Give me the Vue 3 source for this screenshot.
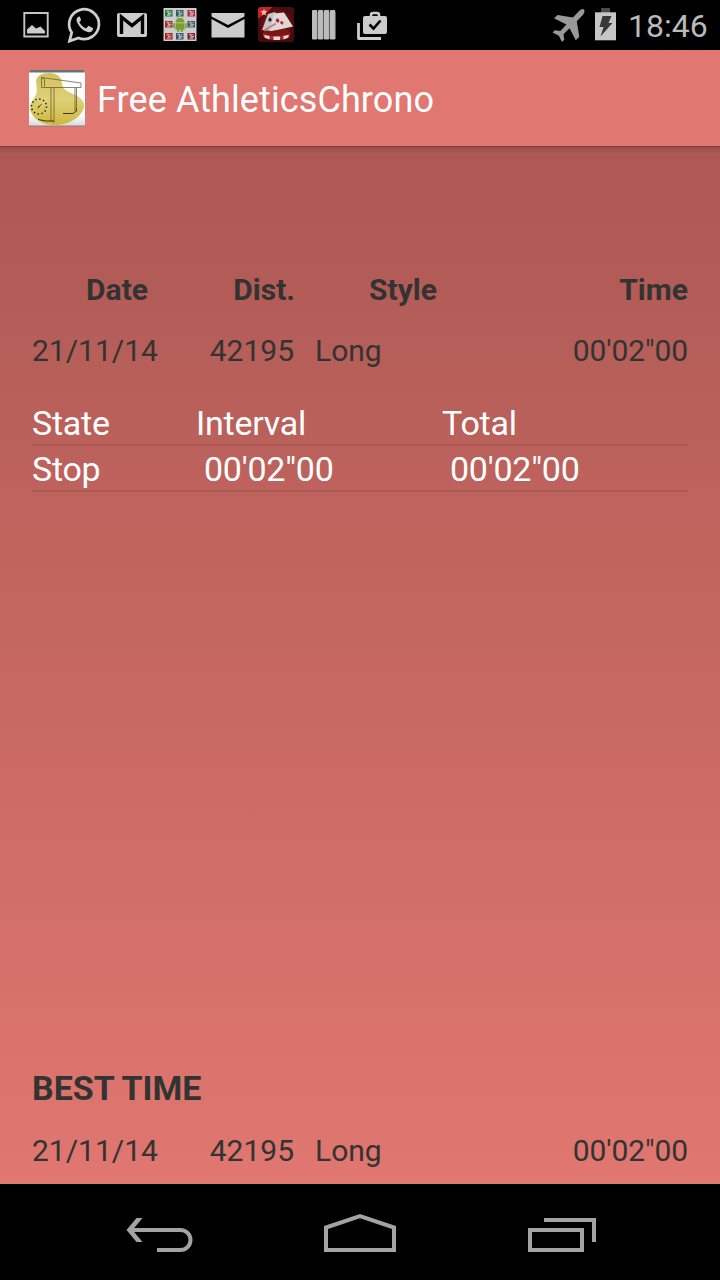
<template>
  <div class="screen">
    <header class="status-bar">
      <div class="notifications">
        <!-- picture -->
        <svg class="slot" viewBox="0 0 48 50">
          <path d="M12.300 13h23.400v23.500H12.300z" fill="none" stroke="#c4c4c4" stroke-width="1.900" />
          <path d="M15 33.500v-4l5-4.500 4 3.500 4.500-2 4.500 4.500v2.500z" fill="#ccc" />
        </svg>
        <!-- chat -->
        <svg class="slot" viewBox="0 0 48 50">
          <path d="M9.500 41l2.200-8.500A14.900 14.900 0 1 1 18.500 38z" fill="none" stroke="#ccc" stroke-width="2.800" />
          <path d="M19.500 16.200c-2.800.8-3.700 3.500-2.200 6.500 2.300 4.700 5.700 7.900 10.500 9.300 3.100.8 5.300-1 5.300-3.800l-4.600-2.500-2.500 2.700c-3.200-1.200-5.400-3.400-6.700-6.300l1.900-2z" fill="#ccc" />
        </svg>
        <!-- gmail -->
        <svg class="slot" viewBox="0 0 48 50">
          <rect x="9" y="13" width="30" height="24" rx="2" fill="#ccc" />
          <path d="M13.500 34V17L24 25.500 34.500 17v17" fill="none" stroke="#000" stroke-width="3.400" />
        </svg>
        <!-- app grid -->
        <svg class="slot" viewBox="0 0 48 50">
          <rect x="7.500" y="8" width="33" height="33" fill="#ccc" />
          <g v-for="t in tiles" :key="t.x + '-' + t.y">
            <rect :x="t.x" :y="t.y" width="7.500" height="6.500" :fill="t.dark" />
            <path :transform="`translate(${t.x} ${t.y})`" d="M1.500 1.500h2v2h3M2 5.200h3.500M5.500 1v1" fill="none" :stroke="t.light" stroke-width="1.300" />
          </g>
          <path d="M19.500 22.500a4.500 4.500 0 0 1 9 0z" fill="#78a02c" />
          <path d="M19.500 23.300h9v6.500h-1.800V32h-1.900v-2.200h-1.600V32h-1.900v-2.200h-1.800zM17.200 23.300h1.600v5h-1.600zM29.200 23.300h1.600v5h-1.600z" fill="#78a02c" />
          <path d="M21 17l1.300 2M27 17l-1.300 2" stroke="#78a02c" stroke-width=".8" />
        </svg>
        <!-- mail -->
        <svg class="slot" viewBox="0 0 48 50">
          <path d="M7.500 13h33v3.500L24 25 7.500 16.500z" fill="#ccc" />
          <path d="M7.500 19L24 28l16.500-9v18.500h-33z" fill="#ccc" />
        </svg>
        <!-- poker -->
        <svg class="slot" viewBox="0 0 48 50">
          <defs>
            <radialGradient id="felt">
              <stop offset="0" stop-color="#a82020" />
              <stop offset="1" stop-color="#4a0b0d" />
            </radialGradient>
          </defs>
          <rect x="6" y="7" width="36" height="35" rx="3" fill="url(#felt)" />
          <path d="M6 19V10q0-3 3-3h12z" fill="#c92026" />
          <path d="M12 9l1 2 2.500.3-1.900 1.700.5 2.500-2.100-1.300-2.100 1.300.5-2.500-1.900-1.700L11 11z" fill="#e8b9b4" />
          <path d="M11 32h27v4q-3 4-13.500 4T11 36z" fill="#b52520" />
          <ellipse cx="24.500" cy="32.500" rx="13.500" ry="3.500" fill="#7c1614" />
          <path d="M12.500 35l5 1v3.500l-5-2zM21.500 36.500h6.500v3.500h-6.500zM31.500 36l5-1v2.500l-5 2z" fill="#ddd" />
          <path d="M16 14l7-2 7 12-10 7-10-1z" fill="#c9c3c3" />
          <path d="M22 13.500l10-1 9 14-16 3.500-7 1z" fill="#ded9d9" />
          <path d="M18 17l2 3-2 2-2-2z" fill="#272024" />
          <path d="M25 18l2.500 2-1 3-3-2zM29 21l2.500 1-1 3-2.500-2z" fill="#b91f29" />
          <path d="M12 30.500l12-7" stroke="#bb7a83" stroke-width="1.500" />
        </svg>
        <!-- bars -->
        <svg class="slot" viewBox="0 0 48 50">
          <g v-for="n in 4" :key="n">
            <rect :x="6 + n * 6" y="10" width="5.200" height="29.500" rx="1" fill="#bcbcbc" />
            <path :d="`M${11.400 + n * 6} 12v27`" stroke="#777" stroke-width=".8" />
          </g>
        </svg>
        <!-- briefcase -->
        <svg class="slot" viewBox="0 0 48 50">
          <path d="M10.500 23v15.500h22.500" fill="none" stroke="#ccc" stroke-width="2.800" stroke-linejoin="round" />
          <rect x="15" y="16" width="24" height="18" rx="2" fill="#ccc" />
          <path d="M23 16.500v-1.500q0-2 2-2h4q2 0 2 2v1.500" fill="none" stroke="#ccc" stroke-width="2.600" />
          <path d="M21.500 24.500l4 4 7-8" fill="none" stroke="#000" stroke-width="2.600" />
        </svg>
      </div>
      <div class="system">
        <svg class="plane" viewBox="0 0 34 34">
          <path d="M31.800 1.500c1.300 1.200.7 3.500-1 5.400l-6 6.300 2.500 15.600-3.500 3.400-6.300-12-6 6.100.8 5.400-2.400 2.300-3-6.200-6.300-3.200 2.200-2.400 5.600.8 6-6.400L2 10.200l3.600-3.100 15.300 2.500 5.700-6.100c1.900-1.900 3.900-3.300 5.200-2z" fill="#999" />
        </svg>
        <svg class="battery" viewBox="0 0 21 34">
          <path d="M6 0h9v5H6z" fill="#4b4b4b" />
          <path d="M0 4.300h21v28H0z" fill="#c6c6c6" />
          <path d="M7.500 8h9l-3 7h4L5.500 28.500l3-9.500H4.500z" fill="#383838" />
        </svg>
        <span class="clock">18:46</span>
      </div>
    </header>

    <div class="action-bar">
      <svg class="app-icon" viewBox="0 0 56 57">
        <defs>
          <linearGradient id="blob" x1="0" y1="0" x2="0" y2="1">
            <stop offset="0" stop-color="#d3c15f" />
            <stop offset=".5" stop-color="#e0d077" />
            <stop offset="1" stop-color="#cdb83f" />
          </linearGradient>
          <linearGradient id="paper" x1="0" y1="0" x2="0" y2="1">
            <stop offset=".8" stop-color="#fff" />
            <stop offset="1" stop-color="#d8d8dc" />
          </linearGradient>
        </defs>
        <path d="M0 2h56v54H0z" fill="url(#paper)" />
        <path d="M2 0h52l2 2.500H0z" fill="#68707a" />
        <path d="M0 56h56" stroke="#937b7b" />
        <path d="M8 8q3-5 12-5 11 0 13 9c0 7 3 8 9 11 9 4 14 8 13 14-2 9-13 17-26 18-15 1-26-6-28-16-1-7 6-11 7-18 0-5-2-9 0-13z" fill="url(#blob)" />
        <path d="M12.500 7.500L52 13v4.500H12.500zM12.500 7.500l3 2v7M22 18v34M25 18v35M46 18v23M47.500 18v22" fill="none" stroke="#59502b" stroke-width=".7" />
        <path d="M9 49.500l8 1.500h8M34 43.500h10l4-3-1-2" fill="none" stroke="#3b341b" stroke-width="1" />
        <circle cx="10" cy="36.500" r="7.500" fill="none" stroke="#1d1b0e" stroke-width="1.500" stroke-dasharray="1.400 2.527" />
        <path d="M8.500 38.500l4-4.500M9 36l2 1" stroke="#3d3719" stroke-width=".8" />
      </svg>
      <h1>Free AthleticsChrono</h1>
    </div>

    <main class="content">
      <div class="record record-head">
        <span>Date</span>
        <span>Dist.</span>
        <span>Style</span>
        <span>Time</span>
      </div>
      <div class="record">
        <span>{{ record.date }}</span>
        <span>{{ record.dist }}</span>
        <span>{{ record.style }}</span>
        <span class="time">{{ record.time }}</span>
      </div>

      <div class="laps">
        <div class="lap">
          <span>State</span>
          <span>Interval</span>
          <span>Total</span>
        </div>
        <div v-for="lap in laps" :key="lap.state" class="lap lap-value">
          <span>{{ lap.state }}</span>
          <span>{{ lap.interval }}</span>
          <span>{{ lap.total }}</span>
        </div>
      </div>

      <section class="best">
        <h2>BEST TIME</h2>
        <div class="record">
          <span>{{ record.date }}</span>
          <span>{{ record.dist }}</span>
          <span>{{ record.style }}</span>
          <span class="time">{{ record.time }}</span>
        </div>
      </section>
    </main>

    <nav class="nav-bar">
      <svg viewBox="0 0 80 48">
        <path d="M12 22h50.500a10 10 0 0 1 0 20H39" />
        <path d="M24.500 10h-6L8.500 22l10 12h6L14.500 22z" class="solid" />
      </svg>
      <svg viewBox="0 0 80 48">
        <path d="M6 42V19.500L40 8l34 11.500V42z" />
      </svg>
      <svg viewBox="0 0 80 48">
        <path d="M8 22h52v20H8zM22 12h50v22" />
      </svg>
    </nav>
  </div>
</template>

<script setup>
import { ref } from 'vue';

const record = ref({
  date: '21/11/14',
  dist: '42195',
  style: 'Long',
  time: `00'02"00`,
});

const laps = ref([
  { state: 'Stop', interval: `00'02"00`, total: `00'02"00` },
]);

// Tiles around the robot in the grid notification
const tiles = [
  { x: 9, y: 10, dark: '#2b7245', light: '#a8c9b2' },
  { x: 20, y: 10, dark: '#38565b', light: '#8fc0a0' },
  { x: 31.500, y: 10, dark: '#a52a3e', light: '#e0a8ae' },
  { x: 9, y: 21, dark: '#9b2d31', light: '#d9a5a5' },
  { x: 31.500, y: 21, dark: '#465660', light: '#a9b6bf' },
  { x: 9, y: 33, dark: '#a01f26', light: '#e08f92' },
  { x: 20, y: 33, dark: '#3b5266', light: '#a9bccb' },
  { x: 31.500, y: 33, dark: '#7c1f2c', light: '#d6a8ad' },
];
</script>

<style>
body {
  margin: 0;
  background: #000;
}
</style>

<style scoped>
.screen {
  display: flex;
  flex-direction: column;
  width: 720px;
  height: 1280px;
  overflow: hidden;
  background: #000;
  font-family: Roboto, "Liberation Sans", sans-serif;
}
svg {
  display: block;
  flex-shrink: 0;
}
.status-bar {
  display: flex;
  justify-content: space-between;
  height: 50px;
  padding: 0 12px;
  flex-shrink: 0;
}
.notifications {
  display: flex;
}
.slot {
  width: 48px;
  height: 50px;
}
.system {
  display: flex;
  align-items: center;
}
.plane {
  width: 34px;
  height: 34px;
  margin-right: 9px;
}
.battery {
  width: 21px;
  height: 34px;
  margin-right: 12px;
}
.clock {
  width: 80px;
  color: #bababa;
  font-size: 32px;
  line-height: 50px;
  padding-top: 1px;
}
.action-bar {
  display: flex;
  align-items: center;
  gap: 12px;
  height: 96px;
  padding-left: 29px;
  flex-shrink: 0;
  background: #e07770;
}
.app-icon {
  width: 56px;
  height: 57px;
}
h1 {
  margin: 0;
  padding-top: 4px;
  color: #fff;
  font-size: 36px;
  font-weight: 400;
  letter-spacing: 0.1px;
  line-height: 44px;
}
.content {
  display: flex;
  flex: 1;
  flex-direction: column;
  box-sizing: border-box;
  padding: 124px 32px 13px;
  background:
    linear-gradient(rgba(60, 30, 25, 0.5), rgba(60, 30, 25, 0.12) 2px, transparent 8px),
    linear-gradient(#ac5853, #e07770);
}
.record {
  display: grid;
  grid-template-columns: 126px 136px 1fr auto;
  color: #333;
  font-size: 30px;
  line-height: 40px;
}
.record span:nth-child(2) {
  text-align: right;
}
.record span:nth-child(3) {
  padding-left: 21px;
}
.record .time {
  letter-spacing: -0.1px;
}
.record-head {
  grid-template-columns: 116px 147px 216px 1fr;
  margin-bottom: 21px;
  font-weight: 700;
}
.record-head span {
  text-align: right;
}
.record-head span:nth-child(3) {
  padding-left: 0;
  text-align: center;
}
.laps {
  margin-top: 29px;
}
.lap {
  display: grid;
  grid-template-columns: 164px 246px 1fr;
  height: 44px;
  border-bottom: 2px solid #ae5852;
  color: #fff;
  font-size: 34px;
  letter-spacing: -0.25px;
  line-height: 46px;
}
.lap-value span:not(:first-child) {
  padding-left: 8px;
}
.best {
  margin-top: auto;
}
h2 {
  margin: 0 0 21px;
  color: #333;
  font-size: 34px;
  font-weight: 700;
  line-height: 44px;
}
.nav-bar {
  display: flex;
  justify-content: center;
  align-items: center;
  gap: 122px;
  height: 96px;
  flex-shrink: 0;
}
.nav-bar svg {
  width: 80px;
  height: 48px;
}
.nav-bar path {
  fill: none;
  stroke: #a3a3a3;
  stroke-width: 4;
}
.nav-bar .solid {
  fill: #a3a3a3;
  stroke: none;
}
</style>
